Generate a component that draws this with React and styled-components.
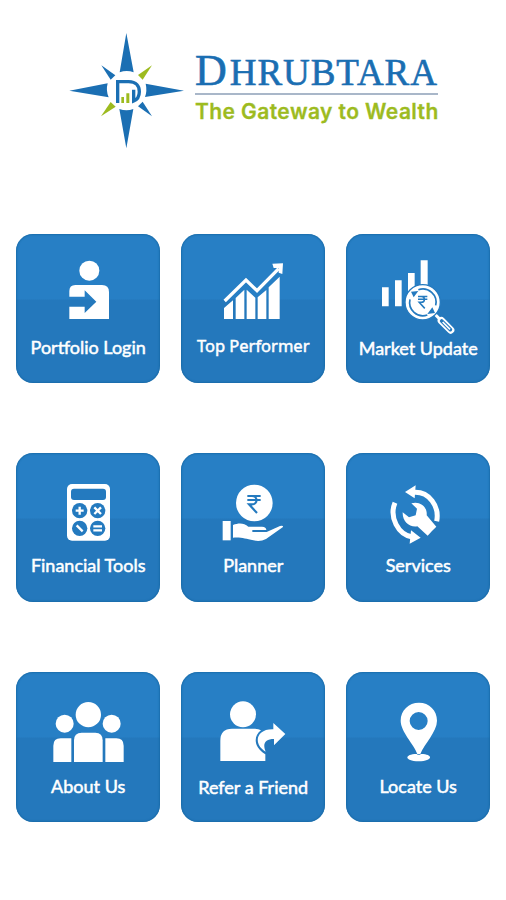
import React from "react";
import styled, { createGlobalStyle } from "styled-components";

const GlobalStyle = createGlobalStyle`
  body {
    margin: 0;
    background: #fff;
  }
`;

const Screen = styled.main`
  box-sizing: border-box;
  width: 506px;
  height: 900px;
  overflow: hidden;
  background: #fff;
`;

const Header = styled.header`
  display: flex;
  align-items: flex-start;
  box-sizing: border-box;
  height: 233.6px;
  padding: 25px 0 0 60px;
`;

const LogoMark = styled.svg`
  flex: none;
  width: 130px;
  height: 130px;
`;

const Brand = styled.div`
  width: 243px;
  margin: 22px 0 0 5px;
  white-space: nowrap;
`;

const BrandName = styled.h1`
  height: 46px;
  margin: 0;
  border-bottom: 2px solid #a9b7c9;
  color: #1a6eb2;
  font-family: "Liberation Serif", serif;
  font-size: 37px;
  font-weight: 400;
  line-height: 48px;
  letter-spacing: 0.95px;
  -webkit-text-stroke: 0.6px #1a6eb2;
`;

const BigLetter = styled.span`
  margin-right: 2px;
  font-size: 44px;
`;

const Tagline = styled.p`
  margin: 4px 0 0;
  color: #9dbb1f;
  font-family: Inter, sans-serif;
  font-size: 21px;
  font-weight: 600;
  line-height: 26px;
  letter-spacing: 0.42px;
  -webkit-text-stroke: 0.3px #9dbb1f;
`;

const Menu = styled.nav`
  display: grid;
  grid-template-columns: repeat(3, 144px);
  grid-auto-rows: 149.5px;
  gap: 69.8px 21px;
  padding-left: 16.2px;
`;

const Tile = styled.a`
  display: flex;
  flex-direction: column;
  align-items: center;
  border-radius: 17px;
  background: linear-gradient(#277fc5 65px, #2478bc 66px);
  box-shadow: inset 0 0 2px 0.5px #12649f;
  color: #fff;
  text-decoration: none;
`;

const TileIcon = styled.svg`
  flex: none;
  width: 144px;
  height: 90px;
  overflow: visible;
  fill: #fff;
`;

const Label = styled.span`
  margin-top: ${(props) => props.$top}px;
  font-family: ${(props) => props.$font || "Lato"}, sans-serif;
  font-size: ${(props) => props.$size || 18}px;
  font-weight: 400;
  line-height: 24px;
  white-space: nowrap;
  -webkit-text-stroke: 0.5px #fff;
`;

const BLUE = "#247abf";

function Rupee({ x, y, size = 1 }) {
  return (
    <path
      transform={`translate(${x} ${y}) scale(${size})`}
      d="M0 2H40M0 14H40M2 2H14C32 2 32 27 14 27H5L29 53"
      fill="none"
      stroke={BLUE}
      strokeWidth="6.5"
    />
  );
}

function Compass() {
  return (
    <LogoMark viewBox="0 0 390 390">
      <g fill="#1b6fb3">
        <path d="M199 24L221 142Q200 134 179 142Z" />
        <path d="M199 370L178 252Q200 260 220 252Z" />
        <path d="M28 197L143 175Q137 197 146 217Z" />
        <path d="M372 197L257 176Q262 197 255 216Z" />
        <path d="M124 121L166 151L152 164Z" />
        <path d="M276 274L234 244L248 230Z" />
      </g>
      <g fill="#9dbb1f">
        <path d="M276 121L234 150L248 164Z" />
        <path d="M123 274L152 231L167 245Z" />
        <path d="M184 216H192V234H184ZM199 205H208V234H199Z" />
      </g>
      <path d="M173 234V170H206C229 170 238 184 238 200C238 212 233 223 221 228V194" fill="none" stroke="#1b6fb3" strokeWidth="10" />
      <path d="M180 207L208 183" stroke="#fff" strokeWidth="2" />
    </LogoMark>
  );
}

function LoginIcon() {
  return (
    <TileIcon viewBox="18 17 432 270">
      <circle cx="238" cy="127" r="30" />
      <path d="M178 205V188Q178 170 196 170H276Q297 170 297 191V272H178V235H224V254L259 220L224 186V205Z" />
    </TileIcon>
  );
}

function GrowthIcon() {
  return (
    <TileIcon viewBox="18 17 432 270">
      <path d="M147 239L174 216V272H147ZM182 209L208 184V272H182ZM215 184L241 208V272H215ZM248 207L274 185V272H248ZM281 177L314 145V272H281Z" />
      <path d="M149 218L213 155L246 187L311 121" fill="none" stroke="#fff" strokeWidth="10" />
      <path d="M292 106L324 105L322 137L311 133V119H296Z" />
    </TileIcon>
  );
}

function MarketIcon() {
  return (
    <TileIcon viewBox="18 17 432 270">
      <path d="M126 177H146V234H126ZM165 156H185V234H165ZM204 134H224V234H204ZM242 96H263V200H242Z" />
      <circle cx="248" cy="222" r="53" stroke={BLUE} strokeWidth="4" />
      <g fill="none" stroke={BLUE} strokeWidth="5">
        <path d="M235 184A40 40 0 0 1 287 231" />
        <path d="M262 260A40 40 0 0 1 210 213" />
      </g>
      <path d="M213 190L235 188L221 207ZM285 254L262 257L277 237Z" fill={BLUE} />
      <Rupee x="234" y="203" size="0.7" />
      <path d="M287 260L303 276" stroke="#fff" strokeWidth="9" />
      <path d="M304 277L332 305" stroke="#fff" strokeWidth="22" strokeLinecap="round" />
      <path d="M305 278L331 304" stroke={BLUE} strokeWidth="11" strokeLinecap="round" />
      <path d="M308 281L330 303" stroke="#fff" strokeWidth="5" />
    </TileIcon>
  );
}

function CalculatorIcon() {
  return (
    <TileIcon viewBox="18 15 432 270">
      <rect x="171" y="108" width="129" height="170" rx="15" />
      <g fill={BLUE}>
        <rect x="183" y="122" width="105" height="34" rx="9" />
        <circle cx="209" cy="188" r="23" />
        <circle cx="263" cy="188" r="23" />
        <circle cx="209" cy="241" r="23" />
        <circle cx="263" cy="241" r="23" />
      </g>
      <path
        d="M197 188H221M209 176V200M253 178L273 198M273 178L253 198M200 232L218 250M250 235H276M250 247H276"
        stroke="#fff"
        strokeWidth="7"
      />
    </TileIcon>
  );
}

function PlannerIcon() {
  return (
    <TileIcon viewBox="18 15 432 270">
      <circle cx="238" cy="165" r="55" />
      <Rupee x="217" y="142" />
      <path d="M143 219H167V277H143Z" />
      <path d="M174 231C192 224 207 225 220 236H261Q274 237 274 246H232V252H275L315 234Q325 231 324 237L273 273Q256 282 235 277C211 272 199 267 174 269Z" />
    </TileIcon>
  );
}

function ServicesIcon() {
  return (
    <TileIcon viewBox="18 15 432 270">
      <g fill="none" stroke="#fff" strokeWidth="15">
        <path d="M221 133C267 130 299 174 290 220" />
        <path d="M165 164C147 207 174 260 217 267" />
      </g>
      <path d="M195 132L227 112L224 151ZM242 269L209 287L213 247Z" />
      <path d="M214 166C239 158 263 176 260 202L289 236Q276 248 263 263L232 235C208 239 187 220 188 193L207 208L227 202L231 182Z" />
    </TileIcon>
  );
}

function PeopleIcon() {
  return (
    <TileIcon viewBox="18 11 432 270">
      <circle cx="235" cy="139" r="38" />
      <circle cx="164" cy="166" r="27" />
      <circle cx="305" cy="166" r="27" />
      <path d="M192 281V216Q192 193 215 193H256Q278 193 278 216V281Z" />
      <path d="M184 210V281H130V232Q130 210 152 210ZM286 210H319Q341 210 341 232V281H286Z" />
    </TileIcon>
  );
}

function ReferIcon() {
  return (
    <TileIcon viewBox="18 11 432 270">
      <circle cx="204" cy="138" r="39" />
      <path d="M136 278V217Q136 181 171 181H240Q251 181 258 186C235 203 235 236 271 258V278Z" />
      <path d="M295 164L331 197L297 231V212C270 212 262 226 272 250C233 227 243 181 295 183Z" />
    </TileIcon>
  );
}

function LocationIcon() {
  return (
    <TileIcon viewBox="18 11 432 270">
      <path
        fillRule="evenodd"
        d="M237 103C268 103 291 126 291 157C291 190 252 228 241 257H232C222 228 182 190 182 157C182 126 206 103 237 103ZM236 131A27 27 0 1 0 236 185A27 27 0 1 0 236 131Z"
      />
      <path d="M230 257Q236 262 243 257C280 257 281 278 236 279C191 278 193 257 230 257Z" />
    </TileIcon>
  );
}

const items = [
  { label: "Portfolio Login", icon: LoginIcon, top: 11 },
  { label: "Top Performer", icon: GrowthIcon, top: 10, font: '"Noto Sans"', size: 16.5 },
  { label: "Market Update", icon: MarketIcon, top: 12.5 },
  { label: "Financial Tools", icon: CalculatorIcon, top: 10 },
  { label: "Planner", icon: PlannerIcon, top: 10 },
  { label: "Services", icon: ServicesIcon, top: 10 },
  { label: "About Us", icon: PeopleIcon, top: 11.8 },
  { label: "Refer a Friend", icon: ReferIcon, top: 12.5 },
  { label: "Locate Us", icon: LocationIcon, top: 11.8 },
];

function App() {
  return (
    <Screen>
      <GlobalStyle />
      <Header>
        <Compass />
        <Brand>
          <BrandName>
            <BigLetter>D</BigLetter>HRUBTARA
          </BrandName>
          <Tagline>The Gateway to Wealth</Tagline>
        </Brand>
      </Header>
      <Menu>
        {items.map(({ label, icon: Icon, top, font, size }) => (
          <Tile key={label}>
            <Icon />
            <Label $top={top} $font={font} $size={size}>
              {label}
            </Label>
          </Tile>
        ))}
      </Menu>
    </Screen>
  );
}

export default App;
